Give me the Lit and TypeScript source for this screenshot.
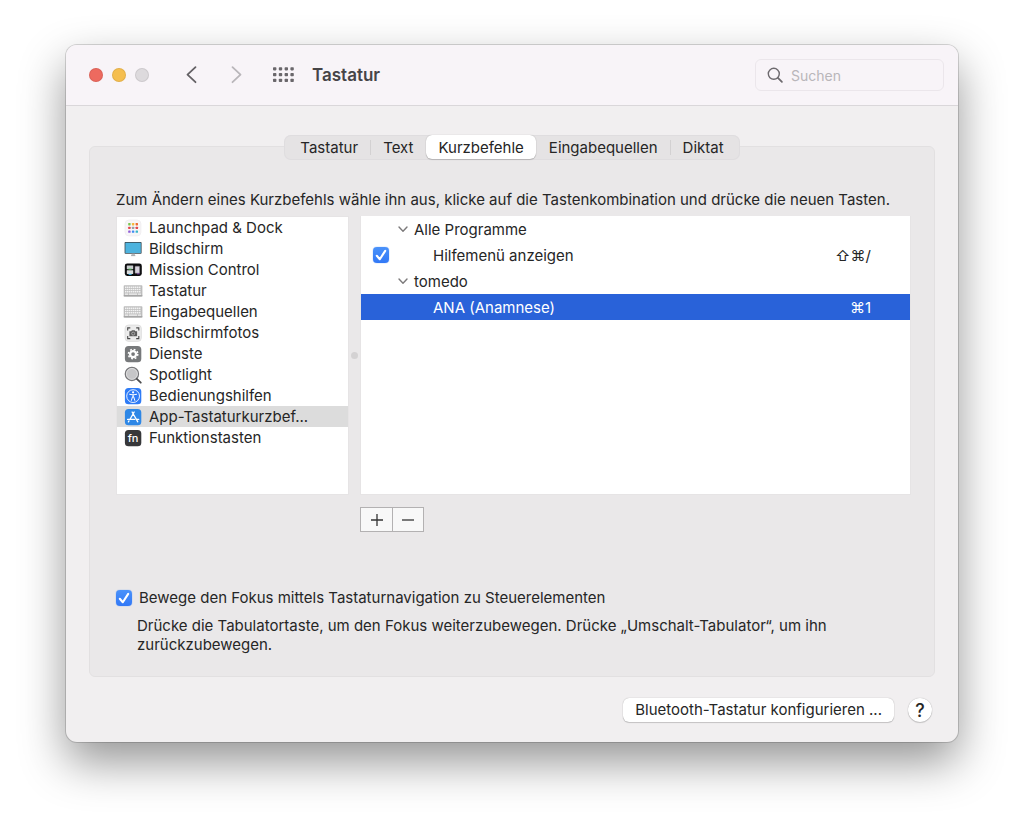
import { LitElement, html, css, svg, nothing, type TemplateResult } from "lit";
import { customElement, property, state } from "lit/decorators.js";
import { classMap } from "lit/directives/class-map.js";

const launchpadColors = ["#7ac74f", "#f6b73c", "#ef6c2f", "#e5484d", "#9aa0a6", "#e5484d", "#8e5bd6", "#3f8cf3", "#39b6c9"];

const icons: Record<string, TemplateResult> = {
  launchpad: svg`
    <rect x="1" y="1" width="16" height="16" rx="4" fill="#f7f6f7" stroke="#eceaec" stroke-width=".6"/>
    ${launchpadColors.map((c, i) => svg`<rect x=${4.2 + (i % 3) * 3.7} y=${4 + Math.floor(i / 3) * 3.7} width="2.4" height="2.4" rx=".6" fill=${c}/>`)}`,
  display: svg`
    <rect x=".6" y="2" width="17" height="11.8" rx=".8" fill="#3b4a52"/>
    <rect x="1.4" y="2.8" width="15.4" height="10.2" fill="#4db3de"/>
    <path d="M7.6 13.8h3.2l.3 1.9h-3.8z" fill="#b9bcbe"/><path d="M7 15.4h4.4v.7H7z" fill="#9a9da0"/>`,
  mission: svg`
    <rect x=".8" y="2.6" width="17" height="12.4" rx="2.4" fill="#0d0d0f"/>
    <rect x="2.8" y="4.4" width="6.4" height="3.8" rx=".4" fill="#c9cdcf"/>
    <rect x="2.8" y="9.2" width="6.4" height="3.8" rx=".4" fill="#d9dcdd"/>
    <rect x="11" y="5.2" width="4.6" height="7" rx=".5" fill="#d6d2dc" stroke="#77737d" stroke-width=".5"/>
    <path d="M4.5 8.1h3" stroke="#55c85a"/><path d="M4.6 13.4h3" stroke="#39b8f0"/><path d="M13 12.8h2.6" stroke="#9d4fd1" stroke-width=".8"/>`,
  keyboard: svg`
    <rect x="-.3" y="3.2" width="18.7" height="11.2" rx=".8" fill="#bdbdbd"/>
    <path d="M-.3 13.9h18.7" stroke="#979797"/>
    <path d="M1 5.2h16M1 7.5h16M1 9.8h16" stroke="#f2f2f2" stroke-width="1.4" stroke-dasharray="1.5 .5"/>
    <path d="M1 12.1h3M4.8 12.1h8.4M14 12.1h3" stroke="#f2f2f2" stroke-width="1.3"/>`,
  screenshot: svg`
    <rect x="1" y="1" width="16.4" height="16.4" rx="3.6" fill="#ececec" stroke="#d4d4d4" stroke-width=".6"/>
    <path d="M3.7 6.4V3.9h2.6M12.2 3.9h2.6v2.5M14.8 12v2.6h-2.6M6.3 14.6H3.7V12" fill="none" stroke="#4a4a4a" stroke-width="1.1"/>
    <path d="M5.4 7.2h1.8l.7-1h2.7l.7 1h1.8v5H5.4z" fill="#5c5c5c"/>
    <circle cx="9.2" cy="9.6" r="1.5" fill="#5c5c5c" stroke="#c8c8c8" stroke-width=".7"/>`,
  services: svg`
    <rect x=".9" y=".9" width="16.4" height="16.4" rx="3.6" fill="#77797b"/>
    <circle cx="9.1" cy="9.1" r="3" fill="none" stroke="#fff" stroke-width="2.3"/>
    <circle cx="9.1" cy="9.1" r="4.7" fill="none" stroke="#fff" stroke-width="1.5" stroke-dasharray="1.85 1.84"/>`,
  spotlight: svg`
    <circle cx="7.9" cy="7.9" r="6.6" fill="#c6c6c8" stroke="#77777a" stroke-width="1.3"/>
    <circle cx="7.9" cy="7.9" r="5.5" fill="none" stroke="#e9e9ea" stroke-width=".7"/>
    <path d="M12.8 12.8l4 3.9" stroke="#4d4d4f" stroke-width="1.8" stroke-linecap="round"/>`,
  accessibility: svg`
    <rect x=".9" y=".9" width="16.4" height="16.4" rx="3.6" fill="#2f7cf6"/>
    <circle cx="9.1" cy="9.1" r="6.4" fill="none" stroke="#fff" stroke-width=".9"/>
    <circle cx="9.1" cy="5.3" r="1.1" fill="#fff"/>
    <path d="M5.6 7.3l3.5.6 3.5-.6M9.1 7.7v2.4M7.4 13.4l1.1-3.6h1.2l1.1 3.6" fill="none" stroke="#fff" stroke-width="1" stroke-linecap="round" stroke-linejoin="round"/>`,
  appstore: svg`
    <rect x=".9" y=".9" width="16.4" height="16.4" rx="3.6" fill="#2d87e6"/>
    <path d="M8.1 4l5.7 9.8M10.2 4L6 11.3M3.6 11.4h7M12.2 11.4h2.5M5 12.9l-.6 1" fill="none" stroke="#fff" stroke-width="1.3" stroke-linecap="round"/>`,
  fn: svg`
    <rect x=".9" y=".9" width="16.4" height="16.4" rx="3.6" fill="#37383a"/>
    <text x="9.1" y="13" text-anchor="middle" font-size="11" font-weight="500" fill="#fff">fn</text>`,
};

interface Category { icon: string; label: string; }

const categories: Category[] = [
  { icon: "launchpad", label: "Launchpad & Dock" },
  { icon: "display", label: "Bildschirm" },
  { icon: "mission", label: "Mission Control" },
  { icon: "keyboard", label: "Tastatur" },
  { icon: "keyboard", label: "Eingabequellen" },
  { icon: "screenshot", label: "Bildschirmfotos" },
  { icon: "services", label: "Dienste" },
  { icon: "spotlight", label: "Spotlight" },
  { icon: "accessibility", label: "Bedienungshilfen" },
  { icon: "appstore", label: "App-Tastaturkurzbef..." },
  { icon: "fn", label: "Funktionstasten" },
];

interface Row { label: string; group?: boolean; keys?: string; checked?: boolean; selected?: boolean; }

const rows: Row[] = [
  { label: "Alle Programme", group: true },
  { label: "Hilfemenü anzeigen", keys: "⇧⌘/", checked: true },
  { label: "tomedo", group: true },
  { label: "ANA (Anamnese)", keys: "⌘1", selected: true },
];

const tabs = ["Tastatur", "Text", "Kurzbefehle", "Eingabequellen", "Diktat"];

@customElement("mac-checkbox")
class MacCheckbox extends LitElement {
  @property({ type: Boolean }) checked = false;
  @property() label = "";
  @property({ type: Boolean, attribute: "hide-label" }) hideLabel = false;

  static styles = css`
    :host { display: block; }
    .wrap { display: flex; align-items: center; gap: 7px; }
    .box { display: grid; width: 16px; height: 16px; flex: none; }
    .box > * { grid-area: 1 / 1; }
    .input {
      appearance: none; margin: 0; width: 16px; height: 16px; border-radius: 4px;
      background: #fff; box-shadow: 0 0 0 1px #c8c7c8;
    }
    .input:checked { background: linear-gradient(#4a92fa, #3278f6); box-shadow: 0 0 1px #3b82f6; }
    .mark { pointer-events: none; visibility: hidden; }
    .input:checked + .mark { visibility: visible; }
  `;

  render() {
    return html`<label class="wrap">
      <span class="box">
        <input class="input" type="checkbox" .checked=${this.checked} aria-label=${this.hideLabel ? this.label : nothing} />
        <svg class="mark" viewBox="0 0 16 16" width="16" height="16" aria-hidden="true">
          <path d="M3.8 8.8l3 3.4L12.2 3.9" fill="none" stroke="#fff" stroke-width="2.1" stroke-linecap="round" stroke-linejoin="round" />
        </svg>
      </span>
      ${this.hideLabel ? nothing : html`<span>${this.label}</span>`}
    </label>`;
  }
}

@customElement("app-root")
class AppRoot extends LitElement {
  @state() private tab = "Kurzbefehle";
  @state() private category = 9;

  static styles = css`
    :host {
      display: grid; box-sizing: border-box; min-height: 100vh; padding: 45px 66px 87px;
      background: #fff; color: #262626;
      font: 15px/19px Inter, "Noto Sans", sans-serif;
    }
    button, input { font: inherit; color: inherit; }
    button { border: 0; padding: 0; background: none; }
    .window {
      display: flex; flex-direction: column; border-radius: 11px; background: #f1eff0; overflow: hidden;
      box-shadow: 0 0 0 1px rgba(0, 0, 0, .15), 0 20px 46px rgba(0, 0, 0, .42);
    }
    .bar {
      display: flex; align-items: center; height: 60px; padding: 0 14px 0 23px;
      background: #f8f4f8; border-bottom: 1px solid #dad7da;
    }
    .lights { display: flex; gap: 9px; }
    .light { width: 14px; height: 14px; border-radius: 50%; box-shadow: inset 0 0 0 1px rgba(0, 0, 0, .08); }
    .red { background: #ed6a5f; }
    .yellow { background: #f5be4f; }
    .gray { background: #dddadd; }
    .nav { display: flex; gap: 24px; margin-left: 33px; color: #646165; }
    .nav .off { color: #b9b6ba; }
    .nav button, .grid { display: grid; place-items: center; }
    .grid { margin-left: 26px; color: #6a676b; }
    .title { margin: 0 auto 0 17px; font-size: 17px; font-weight: 600; color: #464447; }
    .search {
      display: flex; align-items: center; gap: 7px; box-sizing: border-box; width: 189px; height: 32px;
      padding: 0 11px; border: 1px solid #ebe6eb; border-radius: 6px; color: #6d6a6e;
    }
    .search svg { flex: none; }
    .search input { flex: 1; min-width: 0; padding: 0; border: 0; outline: 0; background: none; font-size: 14px; }
    .search input::placeholder { color: #b9b6ba; opacity: 1; }
    .content { flex: 1; display: flex; flex-direction: column; padding: 29px 23px 20px; }
    .tabs {
      display: flex; align-self: center; z-index: 1; box-sizing: border-box; height: 25px; margin-bottom: -14px; padding: 0 4px 1px;
      border-radius: 7px; background: #e5e3e4; box-shadow: inset 0 0 0 1px #dfdddf;
    }
    .tab { padding: 0 12px; border-radius: 6px; }
    .tab.on { background: #fff; box-shadow: 0 0 1px rgba(0, 0, 0, .3), 0 1px 1px rgba(0, 0, 0, .16); }
    .sep { width: 1px; height: 15px; align-self: center; background: #d3d1d2; }
    .sep.clear { background: none; }
    .panel {
      flex: 1; display: flex; flex-direction: column; box-sizing: border-box; padding: 43px 23px 22px 26px;
      border: 1px solid #e2e0e1; border-radius: 6px; background: #eae8e9;
    }
    .intro { margin: 0 0 7px; }
    .lists { flex: 1; display: grid; grid-template-columns: 233px 11px 1fr; min-height: 278px; }
    .cats, .keys { box-sizing: border-box; background: #fff; border: 1px solid #e6e4e5; }
    .cats { margin: 0; padding: 0; list-style: none; }
    .keys { border-top: 0; }
    .cat {
      display: flex; align-items: center; gap: 7px; box-sizing: border-box; width: 100%; height: 21px;
      padding: 0 7px; text-align: left; white-space: nowrap;
    }
    .cat.on { background: #dcdcdc; }
    .cat svg { flex: none; overflow: visible; }
    .grip { place-self: center; width: 7px; height: 7px; border-radius: 50%; background: #d4d2d3; }
    table { width: 100%; border-collapse: collapse; }
    td, th { height: 26px; padding: 0; font-weight: 400; text-align: left; }
    .tick { width: 25px; padding-left: 12px; }
    .group { display: flex; align-items: center; gap: 6px; }
    .name { padding-left: 35px; }
    .combo { padding-right: 39px; text-align: right; }
    .selected { background: #2962d9; color: #fff; }
    .edit { display: flex; align-self: flex-start; margin: 12px 0 56px 244px; border: 1px solid #b3b1b2; background: #f8f8f8; }
    .edit button { display: grid; place-items: center; width: 31px; height: 23px; }
    .edit button + button { border-left: 1px solid #b3b1b2; }
    .hint { margin: 9px 80px 0 21px; }
    .foot { display: flex; justify-content: flex-end; align-items: center; gap: 14px; padding: 21px 3px 0 0; }
    .push, .help {
      background: #fff; box-shadow: 0 0 1px rgba(0, 0, 0, .35), 0 1px 1px rgba(0, 0, 0, .16);
    }
    .push { height: 24px; padding: 0 12px 2px; border-radius: 6px; }
    .help { width: 24px; height: 24px; border-radius: 50%; font-size: 18px; font-weight: 500; }
  `;

  private renderBar() {
    return html`<header class="bar">
      <div class="lights">
        <button class="light red" aria-label="Schließen"></button>
        <button class="light yellow" aria-label="Minimieren"></button>
        <button class="light gray" aria-label="Zoomen" disabled></button>
      </div>
      <nav class="nav">
        <button aria-label="Zurück"><svg width="20" height="20" viewBox="0 0 20 20"><path d="M13.5 2.2L5.5 9.7l8 7.5" fill="none" stroke="currentColor" stroke-width="1.8" stroke-linecap="round" stroke-linejoin="round" /></svg></button>
        <button class="off" aria-label="Vorwärts" disabled><svg width="20" height="20" viewBox="0 0 20 20"><path d="M6.5 2.2l8 7.5-8 7.5" fill="none" stroke="currentColor" stroke-width="1.8" stroke-linecap="round" stroke-linejoin="round" /></svg></button>
      </nav>
      <button class="grid" aria-label="Alle einblenden">
        <svg width="23" height="16" viewBox="0 0 23 16" fill="currentColor">
          ${[0, 1, 2].map((r) => [0, 1, 2, 3].map((c) => svg`<rect x=${1 + c * 5.8} y=${0.2 + r * 5.8} width="3.4" height="3.2" rx=".8" />`))}
        </svg>
      </button>
      <h1 class="title">Tastatur</h1>
      <label class="search">
        <svg width="17" height="17" viewBox="0 0 17 17" aria-hidden="true"><g fill="none" stroke="currentColor" stroke-width="1.4" stroke-linecap="round"><circle cx="6.8" cy="6.8" r="5.5" /><path d="M10.9 10.9l4 4" stroke-width="1.8" /></g></svg>
        <input type="search" placeholder="Suchen" aria-label="Suchen" />
      </label>
    </header>`;
  }

  private renderTabs() {
    const active = tabs.indexOf(this.tab);
    return html`<div class="tabs" role="tablist">
      ${tabs.map((t, i) => html`
        ${i ? html`<span class=${classMap({ sep: true, clear: i === active || i === active + 1 })}></span>` : nothing}
        <button class=${classMap({ tab: true, on: i === active })} role="tab" aria-selected=${i === active} @click=${() => (this.tab = t)}>${t}</button>`)}
    </div>`;
  }

  private renderRow(r: Row) {
    if (r.group) {
      return html`<tr><td class="tick"></td><th colspan="2" scope="rowgroup"><span class="group">
        <svg width="10" height="8" viewBox="0 0 10 8" aria-hidden="true"><path d="M1 2l4 4.3L9 2" fill="none" stroke="#7c7a7b" stroke-width="1.4" stroke-linecap="round" stroke-linejoin="round" /></svg>${r.label}</span></th></tr>`;
    }
    return html`<tr class=${classMap({ selected: !!r.selected })}>
      <td class="tick">${r.checked ? html`<mac-checkbox checked hide-label label=${r.label}></mac-checkbox>` : nothing}</td>
      <td class="name">${r.label}</td><td class="combo">${r.keys}</td></tr>`;
  }

  render() {
    return html`<main class="window">
      ${this.renderBar()}
      <div class="content">
        ${this.renderTabs()}
        <section class="panel">
          <p class="intro">Zum Ändern eines Kurzbefehls wähle ihn aus, klicke auf die Tastenkombination und drücke die neuen Tasten.</p>
          <div class="lists">
            <ul class="cats">
              ${categories.map((c, i) => html`<li><button class=${classMap({ cat: true, on: i === this.category })} @click=${() => (this.category = i)}>
                <svg width="18" height="18" viewBox="0 0 18 18" aria-hidden="true">${icons[c.icon]}</svg><span>${c.label}</span></button></li>`)}
            </ul>
            <span class="grip"></span>
            <div class="keys"><table><tbody>${rows.map((r) => this.renderRow(r))}</tbody></table></div>
          </div>
          <div class="edit">
            <button aria-label="Hinzufügen"><svg width="14" height="14" viewBox="0 0 14 14"><path d="M7 1v12M1 7h12" stroke="#333" stroke-width="1.3" /></svg></button>
            <button aria-label="Entfernen"><svg width="14" height="14" viewBox="0 0 14 14"><path d="M1 7h12" stroke="#333" stroke-width="1.3" /></svg></button>
          </div>
          <mac-checkbox checked label="Bewege den Fokus mittels Tastaturnavigation zu Steuerelementen"></mac-checkbox>
          <p class="hint">Drücke die Tabulatortaste, um den Fokus weiterzubewegen. Drücke „Umschalt-Tabulator“, um ihn zurückzubewegen.</p>
        </section>
        <footer class="foot">
          <button class="push">Bluetooth-Tastatur konfigurieren ...</button>
          <button class="help" aria-label="Hilfe">?</button>
        </footer>
      </div>
    </main>`;
  }
}
